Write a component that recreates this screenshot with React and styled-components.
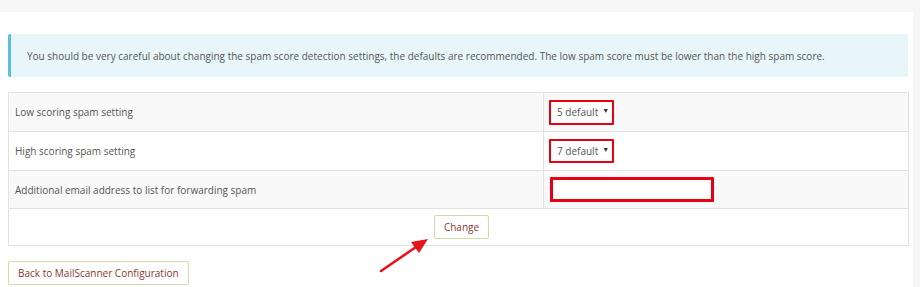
import React from "react";
import styled, { createGlobalStyle } from "styled-components";

const GlobalStyle = createGlobalStyle`
  html, body {
    margin: 0;
    padding: 0;
    background: #f6f6f6;
    font-family: "Open Sans", "Liberation Sans", sans-serif;
  }
`;

const Panel = styled.div`
  position: relative;
  margin-top: 12px;
  width: 913px;
  height: 275px;
  box-sizing: border-box;
  background: #fff;
  padding: 22px 4px 0 8px;
`;

const Alert = styled.div`
  width: 900px;
  height: 43px;
  box-sizing: border-box;
  display: flex;
  align-items: center;
  padding-left: 16px;
  background: #e8f6fa;
  border-left: 3px solid #5bc0de;
  border-radius: 2px;
  color: #555;
  font-size: 10px;
`;

const Table = styled.table`
  margin-top: 15px;
  width: 901px;
  border-collapse: collapse;
  font-size: 10px;
  color: #555;
`;

const Row = styled.tr`
  background: ${(p) => (p.$striped ? "#f9f9f9" : "#fff")};
`;

const Cell = styled.td`
  border: 1px solid #e2e2e2;
  height: ${(p) => p.$height || 39}px;
  box-sizing: border-box;
  padding: 0 0 0 6px;
  width: ${(p) => p.$width || "auto"};
  text-align: ${(p) => (p.$center ? "center" : "left")};
`;

const Select = styled.div`
  display: inline-flex;
  align-items: center;
  gap: 4px;
  box-sizing: border-box;
  height: ${(p) => p.$height}px;
  padding: 0 3px 0 6px;
  margin-left: -1px;
  border: 2.5px solid #e60012;
  border-radius: 1px;
  color: #555;
  font-size: 10px;
  background: #fff;
  & span {
    font-size: 7px;
    margin-top: -3px;
    color: #333;
  }
`;

const Input = styled.div`
  box-sizing: border-box;
  width: 164px;
  height: 25px;
  border: 3px solid #e60012;
  border-radius: 1px;
  background: #fff;
`;

const Button = styled.button`
  font-family: "Open Sans", "Liberation Sans", sans-serif;
  font-size: 10px;
  color: #8a3636;
  background: #fff;
  border: 1px solid #d7d9a9;
  border-radius: 2px;
  height: 24px;
  padding: 0 ${(p) => p.$pad || 9}px;
  cursor: pointer;
`;

const Footer = styled.div`
  margin-top: 14px;
`;

const Arrow = styled.svg`
  position: absolute;
  left: 376px;
  top: 210px;
  pointer-events: none;
`;

export default function App() {
  return (
    <>
      <GlobalStyle />
      <Panel>
        <Alert>
          You should be very careful about changing the spam score detection settings, the defaults are
          recommended. The low spam score must be lower than the high spam score.
        </Alert>
        <Table>
          <tbody>
            <Row $striped>
              <Cell $width="535px">Low scoring spam setting</Cell>
              <Cell>
                <Select $height={25}>
                  5 default <span>▼</span>
                </Select>
              </Cell>
            </Row>
            <Row>
              <Cell>High scoring spam setting</Cell>
              <Cell>
                <Select $height={24}>
                  7 default <span>▼</span>
                </Select>
              </Cell>
            </Row>
            <Row $striped>
              <Cell $height={38}>Additional email address to list for forwarding spam</Cell>
              <Cell $height={38}>
                <Input />
              </Cell>
            </Row>
            <Row>
              <Cell colSpan={2} $center $height={37}>
                <Button>Change</Button>
              </Cell>
            </Row>
          </tbody>
        </Table>
        <Footer>
          <Button>Back to MailScanner Configuration</Button>
        </Footer>
        <Arrow width="60" height="55" viewBox="0 0 60 55">
          <line x1="5" y1="49" x2="40" y2="25" stroke="#e8141c" strokeWidth="2.6" strokeLinecap="round" />
          <polygon points="52,17 35,20 43,31" fill="#e8141c" />
        </Arrow>
      </Panel>
    </>
  );
}
